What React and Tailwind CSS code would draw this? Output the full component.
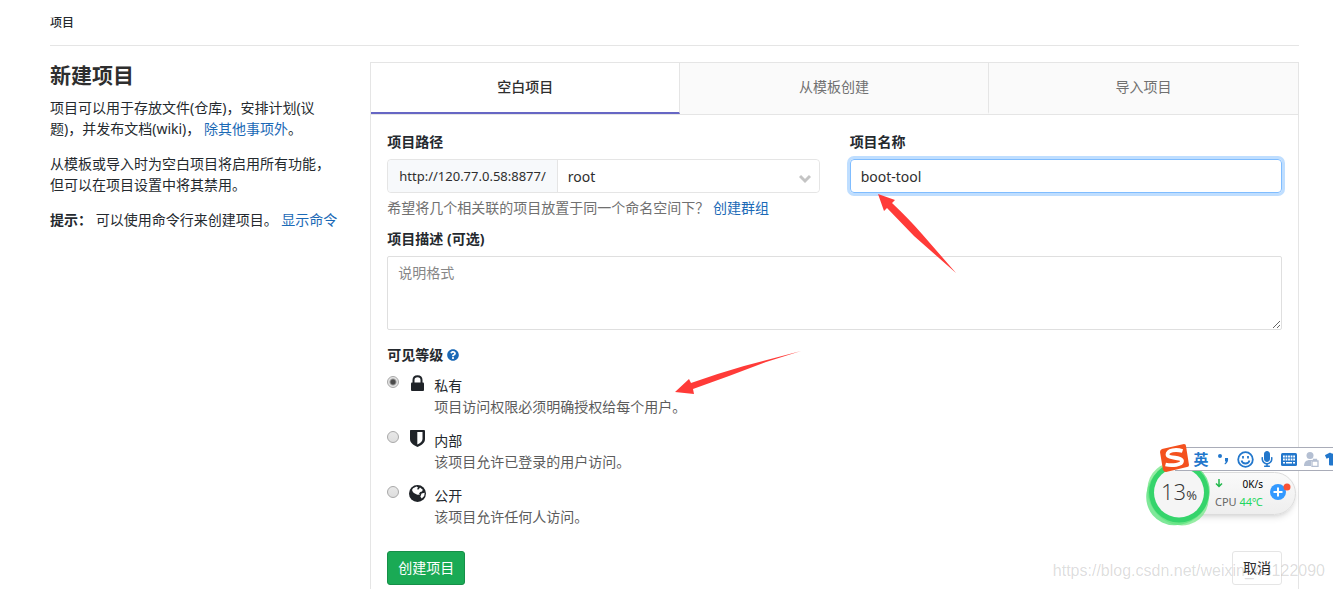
import React, { useState } from 'react'
import { FaQuestionCircle, FaMicrophone, FaTshirt } from 'react-icons/fa'

const tabs = ['空白项目', '从模板创建', '导入项目']

const levels = [
  { id: 'private', name: '私有', text: '项目访问权限必须明确授权给每个用户。', icon: <LockIcon /> },
  { id: 'internal', name: '内部', text: '该项目允许已登录的用户访问。', icon: <ShieldIcon /> },
  { id: 'public', name: '公开', text: '该项目允许任何人访问。', icon: <EarthIcon /> },
]

function LockIcon() {
  return (
    <svg className="h-[17px] w-[17px] shrink-0" viewBox="0 0 17 17" fill="none">
      <path d="M4.500 9V5c0-5 8-5 8 0v4" stroke="currentColor" strokeWidth="2" />
      <rect x="2" y="7.500" width="13" height="8.500" rx="1" fill="currentColor" />
    </svg>
  )
}

function ShieldIcon() {
  return (
    <svg className="h-[17px] w-[17px] shrink-0" viewBox="0 0 17 17" fill="none">
      <path d="M1.500 0h13.500q1 0 1 1v8c0 4-3.500 6.200-7.500 8-4-1.800-7.500-4-7.500-8V1q0-1 .5-1z" fill="currentColor" />
      <path d="M8.300 2h5.200v7c0 2.600-2.400 4.200-5.200 5.600z" fill="#fff" />
    </svg>
  )
}

function EarthIcon() {
  return (
    <svg className="h-[17px] w-[17px] shrink-0" viewBox="0 0 17 17">
      <circle cx="8.500" cy="8.500" r="8.500" fill="currentColor" />
      <path
        d="M4 3.200L7.500 1.600 9 2.600l-1 1.600 1.600.4L11 2.600l2.800 2.200-.8 1.700-1.800.5-1.200 1.800 1.200.6-2.800.4-2.600-1.200L4 7.200 3 5z"
        fill="#fff"
      />
      <path d="M12.500 8.600l3.200-.9-.5 3.400-2.400 2.500-1.400-1.800z" fill="#fff" />
    </svg>
  )
}

function Intro() {
  return (
    <aside className="w-1/4 shrink-0 px-4">
      <h1 className="text-[21px] leading-[26px] font-bold text-[#2e2e2e]">新建项目</h1>
      <div className="mt-[9px] space-y-3.5 whitespace-nowrap">
        <p>
          {'项目可以用于存放文件(仓库)\uff0c安排计划(议'}
          <br />
          {'题)\uff0c并发布文档(wiki)\uff0c '}
          <a href="#features" className="text-[#1b69b6]">除其他事项外</a>。
        </p>
        <p>
          {'从模板或导入时为空白项目将启用所有功能\uff0c'}
          <br />
          但可以在项目设置中将其禁用。
        </p>
        <p>
          <strong>{'提示\uff1a'}</strong> 可以使用命令行来创建项目。{' '}
          <a href="#command" className="text-[#1b69b6]">显示命令</a>
        </p>
      </div>
    </aside>
  )
}

function ProjectForm() {
  const [name, setName] = useState('boot-tool')
  const [level, setLevel] = useState('private')

  return (
    <form className="px-4 pt-4 pb-1" onSubmit={(e) => e.preventDefault()}>
      <div className="grid grid-cols-2 gap-[30px]">
        <div>
          <label htmlFor="namespace" className="block font-bold">项目路径</label>
          <div className="relative mt-[7px] flex h-[34px] rounded border border-[#e5e5e5]">
            <span className="flex items-center rounded-l border-r border-[#e5e5e5] bg-[#f7f9fb] px-[11px] text-[13px] text-[#2e2e2e]">
              http://120.77.0.58:8877/
            </span>
            <select id="namespace" className="min-w-0 flex-1 appearance-none rounded-r bg-white px-2.5 text-[#2e2e2e]">
              <option>root</option>
            </select>
            <svg className="pointer-events-none absolute top-3.5 right-2 h-2.5 w-3" viewBox="0 0 12 10" fill="none">
              <path d="M1 2l5 5 5-5" stroke="#c4c4c4" strokeWidth="3" />
            </svg>
          </div>
          <p className="mt-1 text-[#707070]">
            {'希望将几个相关联的项目放置于同一个命名空间下\uff1f '}
            <a href="#group" className="text-[#1b69b6]">创建群组</a>
          </p>
        </div>
        <div>
          <label htmlFor="name" className="block font-bold">项目名称</label>
          <input
            id="name"
            value={name}
            onChange={(e) => setName(e.target.value)}
            className="mt-[7px] block h-[34px] w-full rounded border border-[#80bdff] px-2.5 text-[#2e2e2e] ring-3 ring-[#bfdeff] outline-none"
          />
        </div>
      </div>

      <label htmlFor="description" className="mt-2.5 block font-bold">项目描述 (可选)</label>
      <textarea
        id="description"
        placeholder="说明格式"
        className="mt-[7px] block h-[74px] w-full rounded-xs border border-[#dfdfdf] px-2.5 py-[5px] placeholder:text-[#868686]"
      />

      <fieldset className="mt-3.5">
        <legend className="flex items-center gap-1 font-bold">
          可见等级
          <a href="#help" aria-label="帮助" className="text-[#1b69b6]">
            <FaQuestionCircle className="h-3 w-3" />
          </a>
        </legend>
        <div className="mt-2.5 space-y-[13px]">
          {levels.map((item) => (
            <div key={item.id} className="flex items-start">
              <input
                type="radio"
                id={item.id}
                name="level"
                checked={level === item.id}
                onChange={() => setLevel(item.id)}
                className="mt-px h-3 w-3 shrink-0 appearance-none rounded-full border border-[#a8a8a8] bg-[linear-gradient(#e8e8e8,#dedede)] checked:bg-[radial-gradient(circle,#4a4a4a_2px,#e4e4e4_4px)]"
              />
              <label htmlFor={item.id} className="flex">
                <span className="mr-2 ml-2.5 flex h-4 w-[17px] justify-center text-[#1f2328]">{item.icon}</span>
                <span>
                  <span className="block">{item.name}</span>
                  <span className="block text-[#5c5c5c]">{item.text}</span>
                </span>
              </label>
            </div>
          ))}
        </div>
      </fieldset>

      <div className="mt-6 flex justify-between">
        <button type="submit" className="h-[34px] rounded-[3px] border border-[#168f48] bg-[#1aaa55] px-2.5 pb-0.5 text-white">
          创建项目
        </button>
        <button type="button" className="h-[34px] rounded-[3px] border border-[#e5e5e5] bg-white px-2.5 pb-0.5 text-[#2e2e2e]">
          取消
        </button>
      </div>
    </form>
  )
}

function Arrows() {
  return (
    <svg className="pointer-events-none absolute top-0 left-0" width="1000" height="420" fill="#ff3b38">
      <path d="M878 194L895 200L892 203Q909 219 922 234L956 273L914 236L887 208L884 211Z" />
      <path d="M675 392L689 379L691 383Q716 374 744 366L801 351L766 362Q730 376 693 389L694 394Z" />
    </svg>
  )
}

function SystemMonitor() {
  return (
    <div className="absolute top-[460px] right-[37px] flex h-[66px] w-[150px] items-center">
      <div className="absolute top-3 right-0 flex h-[43px] w-[120px] items-center rounded-r-full border border-[#dcdcdc] bg-[linear-gradient(#fafafa,#eeeeee)] pb-0.5 pl-[38px] shadow-md">
        <div className="w-12 text-[10px] leading-[18px]">
          <div className="flex items-center justify-between">
            <svg width="8" height="9" viewBox="0 0 8 9" fill="none" stroke="#22b84c" strokeWidth="1.500">
              <path d="M4 0v7.500M1 4.500l3 3 3-3" />
            </svg>
            <span className="text-black">0K/s</span>
          </div>
          <div className="text-[11px] whitespace-nowrap text-[#666]">
            CPU <span className="text-[#1ed760]">44℃</span>
          </div>
        </div>
        <svg className="mb-1 ml-[7px]" width="21" height="18" viewBox="0 0 21 18">
          <circle cx="8" cy="10" r="8" fill="#3399ff" />
          <path d="M8 5.500v9M3.500 10h9" stroke="#fff" strokeWidth="2" />
          <circle cx="17" cy="5" r="3.500" fill="#fa5235" />
        </svg>
      </div>
      <div className="relative flex h-[66px] w-[66px] items-center justify-center">
        <svg className="absolute inset-0" width="66" height="66" viewBox="0 0 66 66">
          <ellipse cx="32" cy="34" rx="33" ry="29" fill="#7de88f" opacity="0.8" transform="rotate(50 32 34)" />
          <ellipse cx="32" cy="34" rx="33" ry="30" fill="#5fe27f" opacity="0.8" transform="rotate(-40 32 34)" />
          <circle cx="33" cy="32.500" r="30" fill="#35d46b" />
          <circle cx="33" cy="32.500" r="25" fill="#f5f5f5" />
        </svg>
        <span className="relative font-['Open_Sans'] text-[22px] leading-6 font-light text-[#333]">
          13<span className="text-[13px] font-normal">%</span>
        </span>
      </div>
    </div>
  )
}

function InputMethodBar() {
  return (
    <div className="absolute top-[447px] right-0 flex h-6 w-[158px] items-center overflow-visible border-y border-[#a9acb8] bg-white text-[#2277cc]">
      <svg className="absolute -top-1 -left-4" width="30" height="28" viewBox="0 0 30 28">
        <path d="M3 5L25 0q2 0 2 2l3 19q0 2-2 2L7 28q-2 0-3-2L1 8q0-2 2-3z" fill="#f4511e" />
        <path d="M23.500 7C17 5 8.500 6 8.500 10.500c0 4.500 14.500 2 14.500 6.500 0 4-10 5-16.500 3.500" fill="none" stroke="#fff" strokeWidth="3.800" />
      </svg>
      <div className="ml-[15px] grid shrink-0 grid-cols-[repeat(7,22px)] items-center justify-items-center">
        <span className="text-[15px] leading-5 font-bold">英</span>
        <svg width="12" height="14" viewBox="0 0 12 14" fill="currentColor">
          <circle cx="3" cy="4" r="2" />
          <path d="M8 6h3c.5 3-.5 5-3 6.500l-.5-1C9 10.500 9 9.500 8 9z" />
        </svg>
        <svg width="17" height="17" viewBox="0 0 17 17" fill="none" stroke="currentColor" strokeWidth="1.800">
          <circle cx="8.500" cy="8.500" r="7.300" />
          <path d="M4.500 9.500c1 4 7 4 8 0M6 5v2.500M11 5v2.500" />
        </svg>
        <FaMicrophone className="h-4 w-4" />
        <svg width="16" height="13" viewBox="0 0 16 13">
          <rect width="16" height="13" rx="1.500" fill="currentColor" />
          <path d="M2 3.500h12M2 6.500h12" stroke="#fff" strokeWidth="1.800" strokeDasharray="1.800 0.750" />
          <path d="M2 9.800h2M5 9.800h6M12 9.800h2" stroke="#fff" strokeWidth="1.500" />
        </svg>
        <svg width="15" height="15" viewBox="0 0 15 15" fill="#b4bfd2">
          <circle cx="6" cy="3.500" r="3.500" />
          <path d="M0 14c0-4 2-6 6-6 2 0 3 .5 4 1H7v5z" />
          <path d="M8 9h6v5.500H8zM9.500 9V7.500h3V9" fill="#fff" stroke="#b4bfd2" strokeWidth="1.300" />
        </svg>
        <FaTshirt className="h-4 w-4" />
      </div>
    </div>
  )
}

export default function App() {
  const [active, setActive] = useState(0)

  return (
    <div
      lang="zh-CN"
      className="relative flex min-h-screen flex-col overflow-hidden bg-white pr-[34px] pl-[50px] font-['Noto_Sans','Noto_Sans_CJK_SC',sans-serif] text-sm leading-[21px] text-[#24292e]"
    >
      <header className="border-b border-[#e5e5e5] pt-3 pb-3 text-xs leading-[21px] font-medium">项目</header>
      <main className="-mx-4 mt-4 flex flex-1">
        <Intro />
        <section className="flex flex-1 flex-col px-4">
          <div className="flex-1 border-x border-t border-[#e5e5e5]">
            <div role="tablist" className="grid grid-cols-3 border-b border-[#e5e5e5]">
              {tabs.map((tab, i) => (
                <button
                  key={tab}
                  role="tab"
                  aria-selected={active === i}
                  onClick={() => setActive(i)}
                  className={
                    active === i
                      ? 'h-[51px] border-r border-b-2 border-r-[#e5e5e5] border-b-[#6666c4] pb-0.5 font-medium text-[#2e2e2e]'
                      : 'h-[51px] border-r border-b-2 border-r-[#e5e5e5] border-b-[#fafafa] bg-[#fafafa] pb-0.5 text-[#707070] last:border-r-0'
                  }
                >
                  {tab}
                </button>
              ))}
            </div>
            <ProjectForm />
          </div>
        </section>
      </main>
      <Arrows />
      <SystemMonitor />
      <InputMethodBar />
      <div className="pointer-events-none absolute right-2 bottom-2 font-['Liberation_Sans',sans-serif] text-base leading-5 text-black/15">
        https://blog.csdn.net/weixin_43122090
      </div>
    </div>
  )
}
